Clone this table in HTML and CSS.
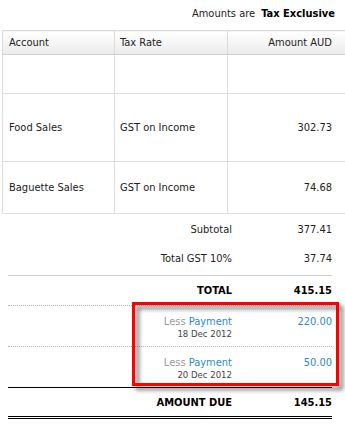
FILE: index.html
```html
<!DOCTYPE html>
<html>
<head>
<meta charset="utf-8">
<link rel="stylesheet" href="styles.css">
</head>
<body>
<div class="page">
  <div class="tax-mode">Amounts are <b>Tax Exclusive</b></div>
  <table class="lines">
    <colgroup><col class="c1"><col class="c2"><col class="c3"></colgroup>
    <thead>
      <tr><th>Account</th><th>Tax Rate</th><th class="num">Amount AUD</th></tr>
    </thead>
    <tbody>
      <tr class="r-empty"><td></td><td></td><td></td></tr>
      <tr class="r-food"><td>Food Sales</td><td>GST on Income</td><td class="num">302.73</td></tr>
      <tr class="r-bag"><td>Baguette Sales</td><td>GST on Income</td><td class="num">74.68</td></tr>
    </tbody>
  </table>
  <div class="totals">
    <div class="row sub"><span class="lbl">Subtotal</span><span class="val">377.41</span></div>
    <div class="row gst"><span class="lbl">Total GST 10%</span><span class="val">37.74</span></div>
    <div class="row total"><span class="lbl">TOTAL</span><span class="val">415.15</span></div>
    <div class="payments">
      <div class="row pay">
        <span class="lbl"><span class="less">Less</span> <span class="link">Payment</span><span class="date">18 Dec 2012</span></span>
        <span class="val link">220.00</span>
      </div>
      <div class="row pay last">
        <span class="lbl"><span class="less">Less</span> <span class="link">Payment</span><span class="date">20 Dec 2012</span></span>
        <span class="val link">50.00</span>
      </div>
      <div class="highlight"></div>
    </div>
    <div class="row due"><span class="lbl">AMOUNT DUE</span><span class="val">145.15</span></div>
  </div>
</div>
</body>
</html>
```
FILE: styles.css
```css
html, body {
  margin: 0;
  padding: 0;
  background: #fff;
}
body {
  font-family: "DejaVu Sans Condensed", "DejaVu Sans", sans-serif;
  font-stretch: condensed;
  font-size: 11px;
  color: #222;
  width: 345px;
  height: 428px;
  overflow: hidden;
}
.page {
  padding-left: 2px;
}
.tax-mode {
  height: 27px;
  line-height: 27px;
  text-align: right;
  padding-right: 10px;
  color: #222;
}
.tax-mode b {
  color: #000;
  font-weight: bold;
  margin-left: 3px;
}
.lines {
  border-collapse: collapse;
  width: 343px;
  table-layout: fixed;
  margin-top: 3px;
}
.c1 { width: 112px; }
.c2 { width: 113px; }
.lines th {
  font-weight: normal;
  text-align: left;
  height: 23px;
  padding: 0 5px 0 5px;
  background: linear-gradient(#ffffff, #ebebeb);
  border-top: 1px solid #dcdcdc;
  border-bottom: 1px solid #cfcfcf;
  border-left: 1px solid #dcdcdc;
  color: #222;
}
.lines th:first-child,
.lines td:first-child {
  padding-left: 6px;
}
.lines td {
  padding: 0 5px 0 5px;
  border-left: 1px solid #dedede;
  border-bottom: 1px solid #dedede;
  vertical-align: middle;
}
.lines .num {
  text-align: right;
  padding-right: 13px;
}
.r-empty td { height: 38px; }
.r-food td { height: 67px; }
.r-bag td { height: 51px; }

.totals {
  margin-left: 6px;
  width: 324px;
}
.row {
  display: flex;
  align-items: center;
}
.lbl {
  width: 224px;
  text-align: right;
}
.val {
  flex: 1;
  text-align: right;
}
.sub { height: 30px; }
.gst { height: 29px; padding-bottom: 2px; border-bottom: 1px solid #cccccc; }
.total {
  height: 29px;
  font-weight: bold;
  color: #000;
  border-bottom: 1px dotted #b5b5b5;
}
.payments {
  position: relative;
}
.pay {
  height: 31px;
  padding-top: 9px;
  align-items: flex-start;
  border-bottom: 1px dotted #b5b5b5;
  line-height: 13px;
}
.pay.last {
  border-bottom: 1px solid #000;
}
.pay .lbl {
  display: block;
}
.less { color: #9a9a9a; }
.link { color: #2c8cc0; }
.date {
  display: block;
  font-size: 9.5px;
  line-height: 12px;
  color: #444;
}
.highlight {
  position: absolute;
  left: 124px;
  top: -4px;
  width: 207px;
  height: 84px;
  box-sizing: border-box;
  border: 3px solid #ff0000;
  filter: drop-shadow(4px 4px 2px rgba(0, 0, 0, 0.55));
  pointer-events: none;
}
.due {
  height: 28px;
  font-weight: bold;
  color: #000;
  border-bottom: 3px double #000;
}
```
